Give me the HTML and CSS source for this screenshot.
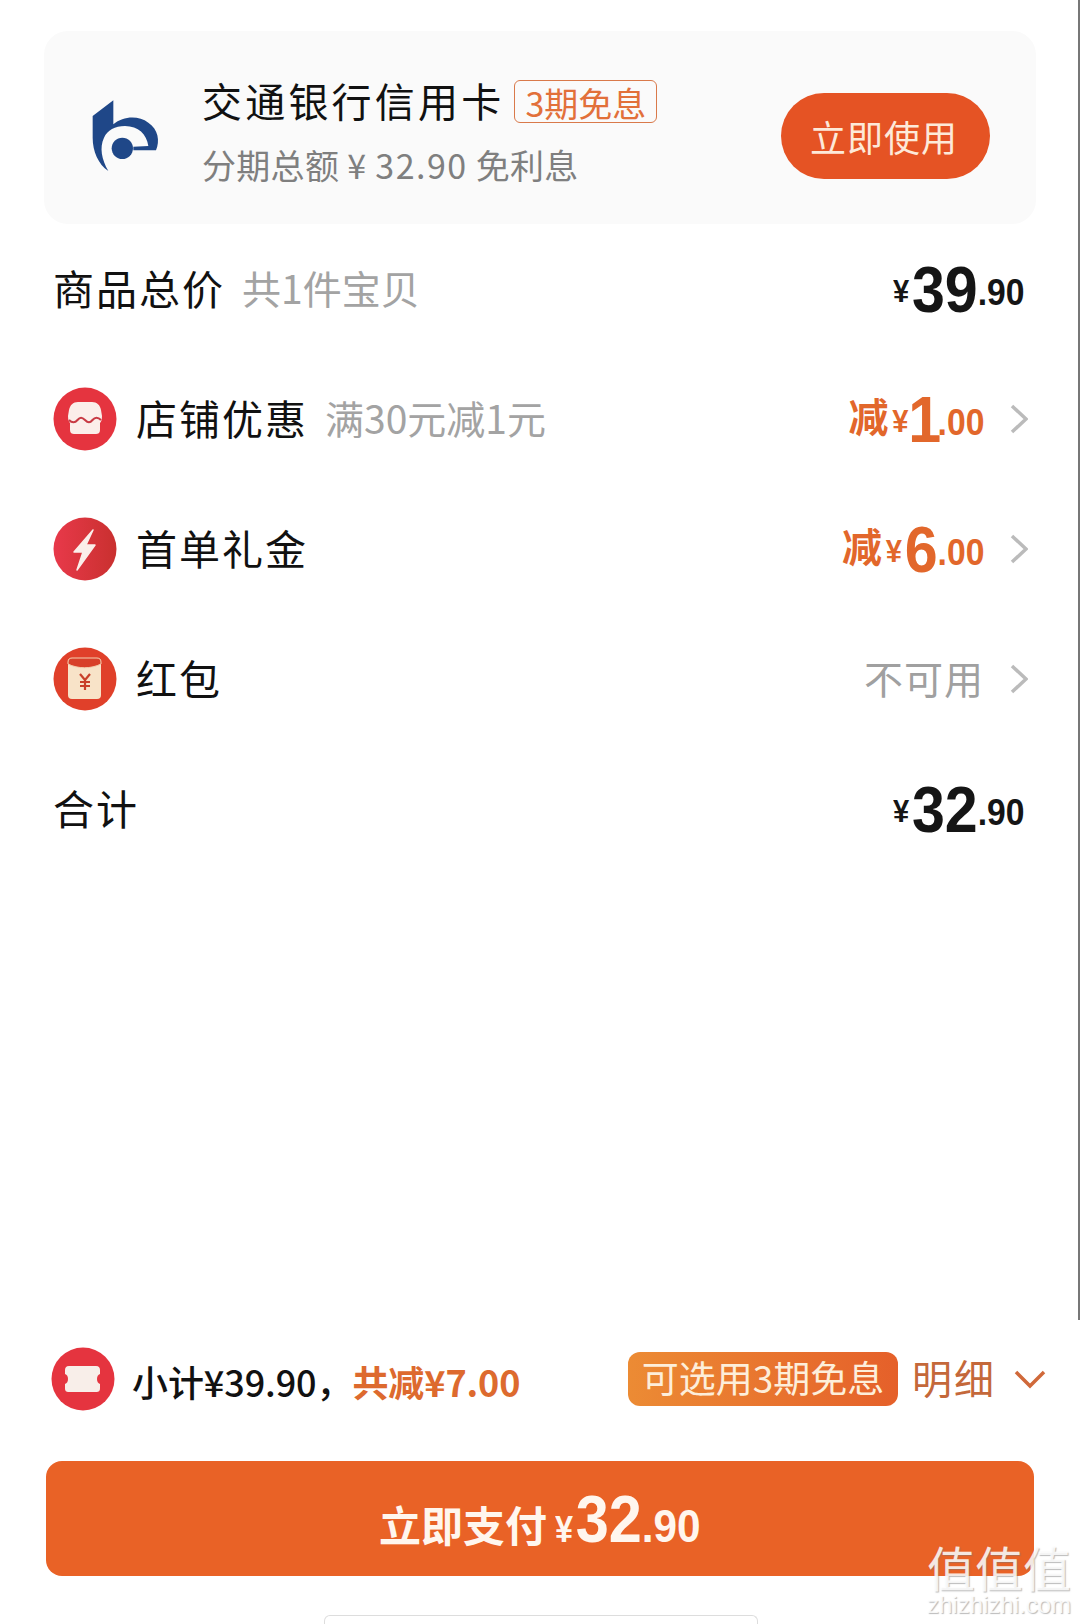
FILE: index.html
```html
<!DOCTYPE html>
<html lang="zh-CN">
<head>
    <meta charset="UTF-8">
    <meta name="viewport" content="width=device-width, initial-scale=1.0">
    <title>确认付款</title>
    <link rel="stylesheet" href="styles.css">
</head>
<body>
    <div class="page">
        <div class="card">
            <svg class="bank-logo" viewBox="0 0 270 270">
                <path fill="#1f4788" d="M100 28 L38 75 L38 140 C38 180 55 220 85 240 C65 205 58 170 72 140 C82 118 105 105 135 105 C175 105 200 130 205 165 L160 167 L160 178 L228 178 C240 150 235 115 205 95 C175 73 130 75 100 100 Z"/>
                <circle fill="#1f4788" cx="127" cy="172" r="32"/>
            </svg>
            <div class="card-info">
                <div class="card-title">
                    <span>交通银行信用卡</span>
                    <span class="tag">3期免息</span>
                </div>
                <div class="card-sub">分期总额 <span class="sub-yen">¥</span><span class="sub-num">32.90</span> 免利息</div>
            </div>
            <div class="use-btn">立即使用</div>
        </div>

        <div class="row">
            <div class="label">商品总价</div>
            <div class="note">共1件宝贝</div>
            <div class="price price-end">
                <span class="yen">¥</span><span class="big">39</span><span class="cents">.90</span>
            </div>
        </div>

        <div class="row">
            <svg class="badge" viewBox="0 0 64 64">
                <circle cx="32" cy="32" r="31.5" fill="#e5343f"/>
                <path fill="#fbeeea" d="M25 15 H39 C44 15 47 18 48 23 L49 29 C49 33 48 35 47 36 V43 C47 46 45 47 43 47 H21 C19 47 17 46 17 43 V36 C16 35 15 33 15 29 L16 23 C17 18 20 15 25 15 Z"/>
                <path fill="none" stroke="#c83a44" stroke-width="2" d="M16 33 C19 36 22 36 24.500 33 C27 30 29 30 32 33 C35 36 37 36 39.500 33 C42 30 45 30 48 33"/>
            </svg>
            <div class="label">店铺优惠</div>
            <div class="note">满30元减1元</div>
            <div class="price discount">
                <span class="jian">减</span><span class="yen">¥</span><span class="big big-one">1</span><span class="cents">.00</span>
            </div>
            <svg class="chevron" viewBox="0 0 18 32"><path d="M2 3 L16 16 L2 29"/></svg>
        </div>

        <div class="row">
            <svg class="badge" viewBox="0 0 64 64">
                <defs>
                    <linearGradient id="boltBg" x1="0" y1="0" x2="1" y2="0">
                        <stop offset="0" stop-color="#e8394a"/>
                        <stop offset="1" stop-color="#c9302f"/>
                    </linearGradient>
                </defs>
                <circle cx="32" cy="32" r="31.5" fill="url(#boltBg)"/>
                <path fill="#fbeeea" stroke="#fbeeea" stroke-width="1.5" stroke-linejoin="round" d="M40 13 L21 35 L30 35 L24 53 L42 28 L33 28 Z"/>
            </svg>
            <div class="label">首单礼金</div>
            <div class="price discount">
                <span class="jian">减</span><span class="yen">¥</span><span class="big">6</span><span class="cents">.00</span>
            </div>
            <svg class="chevron" viewBox="0 0 18 32"><path d="M2 3 L16 16 L2 29"/></svg>
        </div>

        <div class="row">
            <svg class="badge" viewBox="0 0 64 64">
                <circle cx="32" cy="32" r="31.5" fill="#e0402a"/>
                <rect x="15" y="11" width="33" height="41" rx="4" fill="#f8e3c8"/>
                <path fill="#d8402a" stroke="#f4d0b0" stroke-width="1" d="M15 15 C15 12 17 11 19 11 H44 C46 11 48 12 48 15 V17 C38 22 25 22 15 17 Z"/>
                <path fill="none" stroke="#c9402a" stroke-width="2.2" d="M27 27 L32 33 L37 27 M32 33 V43 M27 35 H37 M27 39 H37"/>
            </svg>
            <div class="label">红包</div>
            <div class="unavailable">不可用</div>
            <svg class="chevron" viewBox="0 0 18 32"><path d="M2 3 L16 16 L2 29"/></svg>
        </div>

        <div class="row">
            <div class="label">合计</div>
            <div class="price price-end">
                <span class="yen">¥</span><span class="big">32</span><span class="cents">.90</span>
            </div>
        </div>

        <div class="spacer"></div>

        <div class="summary">
            <svg class="badge" viewBox="0 0 64 64">
                <circle cx="32" cy="32" r="31.5" fill="#e5343f"/>
                <path fill="#f8eee9" d="M18 19 H45 C48 19 49 21 49 23 V27 C45 28 45 36 49 37 V41 C49 44 48 45 45 45 H18 C15 45 14 44 14 41 V37 C18 36 18 28 14 27 V23 C14 21 15 19 18 19 Z"/>
            </svg>
            <div class="summary-text">小计¥39.90，<span class="summary-cut">共减¥7.00</span></div>
            <div class="promo">可选用3期免息</div>
            <div class="detail">明细</div>
            <svg class="arrow-down" viewBox="0 0 32 20"><path d="M2 3 L16 17 L30 3"/></svg>
        </div>

        <div class="pay-btn">
            <span class="pay-label">立即支付</span>
            <span class="pay-amount"><span class="pay-yen">¥</span><span class="pay-big">32</span><span class="pay-cents">.90</span></span>
        </div>

        <div class="home-bar"></div>

        <div class="watermark">
            <div class="wm-cn">值值值</div>
            <div class="wm-en">zhizhizhi.com</div>
        </div>
        <div class="edge-line"></div>
    </div>
</body>
</html>
```

FILE: styles.css
```css
* {
    box-sizing: border-box;
}
body {
    margin: 0;
    background-color: #fff;
    font-family: "Noto Sans CJK SC", "Noto Sans", sans-serif;
    color: #111;
}
.page {
    position: relative;
    width: 1080px;
    height: 1624px;
    overflow: hidden;
    display: flex;
    flex-direction: column;
    padding: 31px 52px 0 53px;
}
.card {
    display: flex;
    align-items: center;
    height: 193px;
    margin: 0 -8px 0 -9px;
    padding: 16px 46px 0 36px;
    background-color: #fafafa;
    border-radius: 24px;
}
.bank-logo {
    width: 90px;
    height: 90px;
    flex: none;
}
.card-info {
    margin-left: 32px;
    padding-bottom: 12px;
    flex: 1;
}
.card-title {
    display: flex;
    align-items: center;
    font-size: 40px;
    line-height: 56px;
    letter-spacing: 3.2px;
}
.tag {
    margin-left: 10px;
    margin-top: 4px;
    padding: 0 10px;
    height: 43px;
    border: 1.5px solid #d9794a;
    border-radius: 6px;
    color: #e2703a;
    font-size: 34px;
    line-height: 44px;
    letter-spacing: 0;
}
.card-sub {
    margin-top: 14px;
    font-size: 34px;
    line-height: 46px;
    color: #7f7f7f;
    letter-spacing: 0.3px;
}
.sub-yen {
    margin-right: 9px;
}
.sub-num {
    letter-spacing: 1.5px;
}
.use-btn {
    width: 209px;
    height: 86px;
    padding-right: 3px;
    border-radius: 43px;
    background-color: #e55324;
    color: #fde9d9;
    font-size: 36px;
    letter-spacing: 1px;
    display: flex;
    align-items: center;
    justify-content: center;
}
.row {
    display: flex;
    align-items: center;
    height: 130px;
}
.badge {
    width: 64px;
    height: 64px;
    flex: none;
    margin-right: 19px;
}
.label {
    margin-bottom: 5px;
    font-size: 41px;
    letter-spacing: 2px;
}
.note {
    margin-left: 17px;
    margin-bottom: 5px;
    font-size: 39px;
    color: #a3a3a3;
}
.price {
    margin-left: auto;
    display: flex;
    align-items: center;
    transform: scaleX(0.91);
    transform-origin: right center;
    font-family: "Liberation Sans", sans-serif;
    font-weight: 700;
    color: #151515;
}
.price-end {
    margin-right: 3px;
}
.yen {
    margin-top: 4px;
    margin-right: 3px;
    font-size: 32px;
}
.big {
    font-size: 65px;
    line-height: 1;
}
.big-one {
    margin: 0 -4px 0 -3px;
}
.cents {
    margin-top: 8px;
    font-size: 37px;
}
.discount {
    color: #e2672b;
}
.jian {
    display: inline-block;
    transform: scaleX(1.1);
    transform-origin: right center;
    margin-right: 4px;
    margin-bottom: 8px;
    font-family: "Noto Sans CJK SC", sans-serif;
    font-size: 40px;
}
.chevron {
    width: 18px;
    height: 32px;
    margin-left: 26px;
    flex: none;
}
.chevron path {
    fill: none;
    stroke: #bbb;
    stroke-width: 3.5;
}
.unavailable {
    margin-left: auto;
    margin-bottom: 5px;
    font-size: 39px;
    letter-spacing: 1px;
    color: #a0a0a0;
}
.spacer {
    flex: 1;
}
.summary {
    display: flex;
    align-items: center;
    height: 64px;
    margin-left: -2px;
    margin-right: -18px;
}
.summary-text {
    margin-top: 4px;
    margin-left: -2px;
    font-size: 36px;
    font-weight: 500;
    letter-spacing: -0.1px;
}
.summary-cut {
    color: #dd6a2e;
    font-weight: 700;
}
.promo {
    margin-left: auto;
    width: 270px;
    height: 54px;
    padding-bottom: 4px;
    border-radius: 12px;
    background: linear-gradient(90deg, #ec8b34, #e5602a);
    color: #fdeeda;
    font-size: 37px;
    display: flex;
    align-items: center;
    justify-content: center;
}
.detail {
    margin-left: 14px;
    margin-bottom: 4px;
    font-size: 40px;
    letter-spacing: 2px;
    color: #c4683a;
}
.arrow-down {
    width: 32px;
    height: 20px;
    margin-left: 18px;
    flex: none;
}
.arrow-down path {
    fill: none;
    stroke: #d0693a;
    stroke-width: 3.5;
}
.pay-btn {
    margin: 50px -6px 0 -7px;
    height: 115px;
    padding-top: 4px;
    border-radius: 16px;
    background-color: #e96226;
    color: #fff6ee;
    display: flex;
    align-items: baseline;
    justify-content: center;
    line-height: 109px;
}
.pay-label {
    font-size: 42px;
    font-weight: 700;
}
.pay-amount {
    margin-left: 8px;
    margin-right: -16px;
    transform: scaleX(0.9);
    transform-origin: left center;
    font-family: "Liberation Sans", sans-serif;
    font-weight: 700;
}
.pay-yen {
    margin-right: 3px;
    font-size: 36px;
}
.pay-big {
    font-size: 66px;
}
.pay-cents {
    font-size: 47px;
}
.home-bar {
    align-self: center;
    width: 434px;
    height: 9px;
    margin-top: 39px;
    border: 1px solid #ddd;
    border-bottom: none;
    border-radius: 6px 6px 0 0;
}
.watermark {
    position: absolute;
    right: 8px;
    bottom: 7px;
    width: 146px;
    text-align: center;
    white-space: nowrap;
    color: rgba(255, 255, 255, 0.85);
    text-shadow: 1px 1px 1px rgba(120, 120, 120, 0.5);
}
.wm-cn {
    font-size: 48px;
    line-height: 54px;
}
.wm-en {
    font-family: "Liberation Sans", sans-serif;
    font-size: 24px;
    line-height: 24px;
}
.edge-line {
    position: absolute;
    top: 0;
    right: 0;
    width: 2px;
    height: 1320px;
    background-color: #777;
}
```
